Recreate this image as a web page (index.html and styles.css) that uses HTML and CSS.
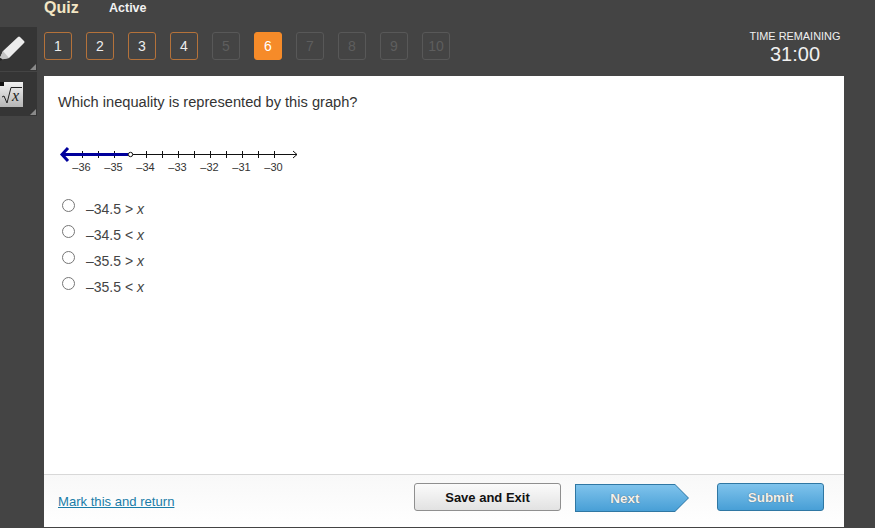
FILE: index.html
```html
<!DOCTYPE html>
<html lang="en">
<head>
    <meta charset="UTF-8">
    <meta name="viewport" content="width=device-width, initial-scale=1.0">
    <title>Quiz</title>
    <link rel="stylesheet" href="styles.css">
</head>
<body>
    <div class="page">
        <div class="rail">
            <div class="tool">
                <svg class="pencil" width="26" height="30" viewBox="0 0 26 30">
                    <path d="M3 18 L18 4 Q19 3 20 4 L24 8 Q25 9 24 10 L9 25 L-1 27 Z" fill="#ececec"/>
                    <path d="M3 18 L9 25 L-1 27 Z" fill="#c4c4c4"/>
                    <path d="M-1 24 L3 26.500 L-1 28 Z" fill="#222"/>
                </svg>
                <span class="corner"></span>
            </div>
            <div class="tool">
                <div class="math-icon">
                    <span class="notch"></span>
                    <svg class="radical" width="23" height="25" viewBox="0 0 23 25">
                        <path d="M2 15 L4 14 L7 21 L11 5.500 L22 5.500" fill="none" stroke="#222" stroke-width="1"/>
                        <text x="12" y="19">x</text>
                    </svg>
                </div>
                <span class="corner"></span>
            </div>
        </div>

        <div class="main">
            <header class="top">
                <div class="title-row">
                    <span class="quiz-title">Quiz</span>
                    <span class="quiz-status">Active</span>
                </div>
                <div class="nav-row">
                    <nav class="steps">
                        <a class="step done">1</a>
                        <a class="step done">2</a>
                        <a class="step done">3</a>
                        <a class="step done">4</a>
                        <a class="step">5</a>
                        <a class="step current">6</a>
                        <a class="step">7</a>
                        <a class="step">8</a>
                        <a class="step">9</a>
                        <a class="step">10</a>
                    </nav>
                    <div class="timer">
                        <div class="timer-label">TIME REMAINING</div>
                        <div class="timer-value">31:00</div>
                    </div>
                </div>
            </header>

            <section class="card">
                <div class="question">
                    <p class="prompt">Which inequality is represented by this graph?</p>
                    <svg class="number-line" width="244" height="36" viewBox="0 0 244 36">
                        <line x1="4" y1="11.5" x2="239" y2="11.5" stroke="#111" stroke-width="1"/>
                        <path d="M235 8 L239 11.5 L235 15" fill="none" stroke="#111" stroke-width="1"/>
                        <g stroke="#111" stroke-width="1">
                            <line x1="24.5" y1="8" x2="24.5" y2="15"/>
                            <line x1="40.5" y1="8" x2="40.5" y2="15"/>
                            <line x1="56.5" y1="8" x2="56.5" y2="15"/>
                            <line x1="88.5" y1="8" x2="88.5" y2="15"/>
                            <line x1="104.5" y1="8" x2="104.5" y2="15"/>
                            <line x1="120.5" y1="8" x2="120.5" y2="15"/>
                            <line x1="136.5" y1="8" x2="136.5" y2="15"/>
                            <line x1="152.5" y1="8" x2="152.5" y2="15"/>
                            <line x1="168.5" y1="8" x2="168.5" y2="15"/>
                            <line x1="184.5" y1="8" x2="184.5" y2="15"/>
                            <line x1="200.5" y1="8" x2="200.5" y2="15"/>
                            <line x1="216.5" y1="8" x2="216.5" y2="15"/>
                        </g>
                        <line x1="6" y1="11.5" x2="70" y2="11.5" stroke="#00009c" stroke-width="3"/>
                        <path d="M10 5 L4 11.5 L10 18" fill="none" stroke="#00009c" stroke-width="3"/>
                        <circle cx="72.5" cy="11.5" r="2.2" fill="#fff" stroke="#111" stroke-width="1"/>
                        <g class="tick-labels">
                            <text x="23.500" y="28" text-anchor="middle">–36</text>
                            <text x="55.500" y="28" text-anchor="middle">–35</text>
                            <text x="87.500" y="28" text-anchor="middle">–34</text>
                            <text x="119.500" y="28" text-anchor="middle">–33</text>
                            <text x="151.500" y="28" text-anchor="middle">–32</text>
                            <text x="183.500" y="28" text-anchor="middle">–31</text>
                            <text x="215.500" y="28" text-anchor="middle">–30</text>
                        </g>
                    </svg>
                    <form class="answers">
                        <label class="answer"><input type="radio" name="answer"><span>–34.5 &gt; <i>x</i></span></label>
                        <label class="answer"><input type="radio" name="answer"><span>–34.5 &lt; <i>x</i></span></label>
                        <label class="answer"><input type="radio" name="answer"><span>–35.5 &gt; <i>x</i></span></label>
                        <label class="answer"><input type="radio" name="answer"><span>–35.5 &lt; <i>x</i></span></label>
                    </form>
                </div>
                <footer class="card-footer">
                    <a class="mark-link" href="#">Mark this and return</a>
                    <div class="actions">
                        <button class="btn btn-save" type="button">Save and Exit</button>
                        <div class="btn-next"><button class="btn-next-inner" type="button">Next</button></div>
                        <button class="btn btn-submit" type="button">Submit</button>
                    </div>
                </footer>
            </section>
        </div>
    </div>
</body>
</html>
```

FILE: styles.css
```css
html, body {
    margin: 0;
    padding: 0;
    height: 100%;
}
body {
    font-family: 'Liberation Sans', Arial, sans-serif;
    background-color: #444444;
    overflow: hidden;
}
.page {
    display: flex;
    width: 875px;
    height: 528px;
}
.rail {
    width: 44px;
    padding-top: 27px;
    box-sizing: border-box;
    display: flex;
    flex-direction: column;
    gap: 1px;
    flex-shrink: 0;
}
.tool {
    position: relative;
    width: 37px;
    height: 44px;
    background-color: #353535;
    overflow: hidden;
}
.pencil {
    display: block;
    margin: 6px 0 0 0;
    overflow: visible;
}
.corner {
    position: absolute;
    right: 1px;
    bottom: 1px;
    width: 0;
    height: 0;
    border-left: 6px solid transparent;
    border-bottom: 6px solid #8a8a8a;
}
.math-icon {
    position: absolute;
    left: 0;
    top: 10px;
    width: 23px;
    height: 25px;
    background: linear-gradient(#f2f2f2, #b5b5b5);
}
.notch {
    position: absolute;
    left: 0;
    top: 0;
    width: 4px;
    height: 4px;
    background-color: #111;
}
.radical {
    display: block;
}
.radical text {
    font-family: 'Liberation Serif', serif;
    font-size: 16px;
    font-style: italic;
    fill: #222;
}
.main {
    width: 800px;
    display: flex;
    flex-direction: column;
    height: 527px;
}
.top {
    height: 76px;
    flex-shrink: 0;
    width: 831px;
}
.title-row {
    display: flex;
    align-items: center;
    height: 16px;
}
.quiz-title {
    color: #f3e6c4;
    font-size: 16px;
    font-weight: bold;
    width: 65px;
}
.quiz-status {
    color: #f2f2f2;
    font-size: 12.5px;
    font-weight: bold;
}
.nav-row {
    display: flex;
    justify-content: space-between;
    margin-top: 12px;
}
.steps {
    display: flex;
    gap: 14px;
    margin-top: 4px;
}
.step {
    width: 28px;
    height: 28px;
    box-sizing: border-box;
    border: 1px solid #585858;
    border-radius: 3px;
    color: #5e5e5e;
    font-size: 14px;
    line-height: 26px;
    text-align: center;
}
.step.done {
    border-color: #b5723a;
    color: #ededed;
}
.step.current {
    background-color: #f68b29;
    border-color: #f68b29;
    color: #fff;
}
.timer {
    width: 92px;
    text-align: center;
    color: #f0f0f0;
    margin-right: 34px;
    padding-top: 1px;
}
.timer-label {
    font-size: 10.9px;
    line-height: 14px;
}
.timer-value {
    font-size: 20px;
    line-height: 22px;
}
.card {
    flex: 1;
    background-color: #ffffff;
    display: flex;
    flex-direction: column;
}
.question {
    flex: 1;
    padding: 0 14px;
}
.prompt {
    margin: 17px 0 0 0;
    font-size: 14.65px;
    line-height: 18px;
    color: #333;
}
.number-line {
    display: block;
    margin: 32px 0 0 0;
}
.tick-labels text {
    font-family: 'Liberation Sans', Arial, sans-serif;
    font-size: 11px;
    fill: #333;
}
.answers {
    margin-top: 17px;
    display: flex;
    flex-direction: column;
}
.answer {
    display: flex;
    height: 26px;
    color: #444;
    font-size: 14px;
}
.answer input {
    margin: 3px 0 0 4px;
    width: 13px;
    height: 13px;
}
.answer span {
    margin: 5px 0 0 11px;
}
.card-footer {
    height: 53px;
    box-sizing: border-box;
    border-top: 1px solid #d8d8d8;
    background: linear-gradient(#f8f8f8, #ffffff);
    padding: 8px 20px 0 14px;
    display: flex;
    justify-content: space-between;
    align-items: flex-start;
}
.mark-link {
    color: #1a7ca8;
    font-size: 13.1px;
    margin-top: 11px;
}
.actions {
    display: flex;
    align-items: flex-start;
}
.btn {
    height: 28px;
    border-radius: 3px;
    font-family: inherit;
    font-size: 13px;
    font-weight: bold;
    padding: 0;
}
.btn-save {
    width: 147px;
    color: #111;
    background: linear-gradient(#fbfbfb, #e2e2e2);
    border: 1px solid #8f8f8f;
}
.btn-next {
    width: 114px;
    height: 28px;
    margin: 1px 28px 0 14px;
    background-color: #2f77a3;
    clip-path: polygon(0 0, 100px 0, 114px 14px, 100px 28px, 0 28px);
}
.btn-next-inner {
    display: block;
    width: 112px;
    height: 26px;
    margin: 1px;
    padding: 0 14px 0 0;
    border: none;
    background: linear-gradient(#7fc3ec, #489fd6);
    clip-path: polygon(0 0, 99px 0, 112px 13px, 99px 26px, 0 26px);
    color: #f2f2f2;
    font-family: inherit;
    font-size: 13.5px;
    font-weight: bold;
    text-shadow: 0 0 1px #444;
}
.btn-submit {
    width: 107px;
    color: #f2f2f2;
    background: linear-gradient(#7fc3ec, #489fd6);
    border: 1px solid #2f77a3;
    font-size: 13.5px;
    text-shadow: 0 0 1px #444;
}
```
